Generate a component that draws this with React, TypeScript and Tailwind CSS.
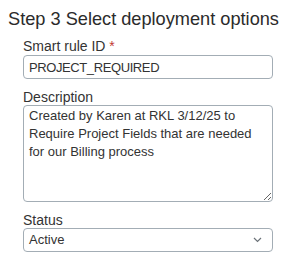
import { useState } from 'react';

const Chevron = () => (
  <svg width="9" height="6" viewBox="0 0 9 6" fill="none" className="text-[#6b7278]">
    <path d="M1 1l3.5 3.5L8 1" stroke="currentColor" strokeWidth="1.2" />
  </svg>
);

const App = () => {
  const [ruleId, setRuleId] = useState('PROJECT_REQUIRED');
  const [desc, setDesc] = useState(
    'Created by Karen at RKL 3/12/25 to Require Project Fields that are needed for our Billing process'
  );

  return (
    <div className="w-[284px] h-[264px] bg-white text-[#333] font-['Liberation_Sans',Arial,sans-serif] pt-2">
      <h2 className="text-[18.2px] leading-[22px] pl-2 text-[#2b2b2b]">Step 3 Select deployment options</h2>

      <div className="ml-[23px] w-[250px] mt-2 flex flex-col">
        <label className="text-[14px] leading-4 mb-px">
          Smart rule ID <span className="text-[#c23934]">*</span>
        </label>
        <input
          type="text"
          value={ruleId}
          onChange={(e) => setRuleId(e.target.value)}
          className="h-6 border border-[#a3adb5] rounded px-[5px] text-[13px] tracking-[-0.4px] text-[#333] outline-none"
        />

        <label className="text-[14px] leading-4 mt-[10px]">Description</label>
        <textarea
          value={desc}
          onChange={(e) => setDesc(e.target.value)}
          className="h-[97px] border border-[#a3adb5] rounded pl-[5px] pr-1 pt-px text-[13px] leading-[18px] text-[#333] outline-none"
        />

        <label className="text-[14px] leading-4 mt-[10px]">Status</label>
        <div className="h-6 border border-[#a3adb5] rounded pl-[5px] pr-[10px] flex items-center justify-between text-[13px]">
          <span>Active</span>
          <Chevron />
        </div>
      </div>
    </div>
  );
};

export default App;
